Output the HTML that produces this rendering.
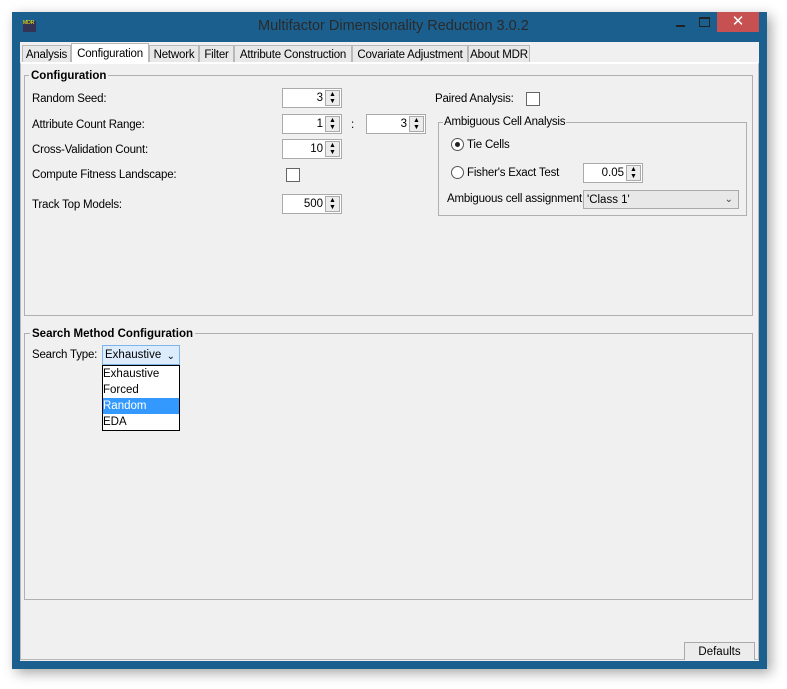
<!DOCTYPE html>
<html><head><style>
body{margin:0;width:787px;height:689px;background:#fff;position:relative;overflow:hidden;font-family:"Liberation Sans",sans-serif;font-size:11.5px;color:#000}
.a{position:absolute}
.win{left:12px;top:12px;width:755px;height:657px;background:#1b5f8e;box-shadow:4px 4px 12px rgba(0,0,0,.35)}
.client{left:20px;top:42px;width:739px;height:619px;background:#f0f0f0}
.tab{position:absolute;top:45px;height:17px;border:1px solid #b8b8b8;border-bottom:none;background:#e8e8e8;font-size:11.5px;line-height:18px;text-align:center;box-sizing:border-box;white-space:nowrap;overflow:hidden;letter-spacing:-0.2px}
.grp{position:absolute;border:1px solid #b0b0b0;box-sizing:border-box}
.lg{position:absolute;background:#f0f0f0;font-weight:bold;padding:0 2px;font-size:11.5px;white-space:nowrap;line-height:16px}
.spin{position:absolute;width:60px;height:20px;border:1px solid #aaa;background:#fff;box-sizing:border-box;line-height:19px;text-align:right}
.spin span{position:absolute;right:18px}
.spin i{position:absolute;right:1px;top:1px;width:15px;height:16px;border:1px solid #aaa;background:#ececec;font-style:normal;font-size:7px;line-height:7px;text-align:center;box-sizing:border-box}
.chk{position:absolute;width:12px;height:12px;border:1px solid #666;background:#fff}
.t{position:absolute;white-space:nowrap;letter-spacing:-0.2px;line-height:17px}
</style></head><body>
<div class="a win"></div>
<div class="t" style="left:258px;top:18px;font-size:14.5px;color:#2a2a2a;letter-spacing:0">Multifactor Dimensionality Reduction 3.0.2</div>
<div class="a" style="left:23px;top:21px;width:13px;height:11px;background:#335;font-size:5px;color:#ff0;line-height:5px">MDR</div>
<div class="a" style="left:676px;top:25px;width:9px;height:2px;background:#222"></div>
<div class="a" style="left:699px;top:17px;width:9px;height:7px;border:1px solid #222;border-top-width:2px"></div>
<div class="a" style="left:717px;top:12px;width:42px;height:20px;background:#c75050;color:#fff;text-align:center;font-size:15px;line-height:20px">✕</div>
<div class="a client"></div>
<div class="tab" style="left:22px;width:49px">Analysis</div>
<div class="tab" style="left:71px;top:43px;height:20px;width:78px;background:#fff;line-height:20px">Configuration</div>
<div class="tab" style="left:149px;width:50px">Network</div>
<div class="tab" style="left:199px;width:35px">Filter</div>
<div class="tab" style="left:234px;width:118px">Attribute Construction</div>
<div class="tab" style="left:352px;width:116px">Covariate Adjustment</div>
<div class="tab" style="left:468px;width:62px">About MDR</div>
<div class="a" style="left:20px;top:62px;width:739px;height:598px;border:1px solid #b8b8b8;border-top:2px solid #fff;box-sizing:border-box"></div>
<div class="grp" style="left:24px;top:75px;width:729px;height:241px"></div>
<div class="lg" style="left:29px;top:68px">Configuration</div>
<div class="t" style="left:32px;top:91px">Random Seed:</div>
<div class="t" style="left:32px;top:117px">Attribute Count Range:</div>
<div class="t" style="left:32px;top:142px">Cross-Validation Count:</div>
<div class="t" style="left:32px;top:167px">Compute Fitness Landscape:</div>
<div class="t" style="left:32px;top:197px">Track Top Models:</div>
<div class="spin" style="left:282px;top:88px"><span>3</span><i>▲<br>▼</i></div>
<div class="spin" style="left:282px;top:114px"><span>1</span><i>▲<br>▼</i></div>
<div class="t" style="left:351px;top:117px">:</div>
<div class="spin" style="left:366px;top:114px"><span>3</span><i>▲<br>▼</i></div>
<div class="spin" style="left:282px;top:139px"><span>10</span><i>▲<br>▼</i></div>
<div class="chk" style="left:286px;top:168px"></div>
<div class="spin" style="left:282px;top:194px"><span>500</span><i>▲<br>▼</i></div>
<div class="t" style="left:435px;top:91px">Paired Analysis:</div>
<div class="chk" style="left:526px;top:92px"></div>
<div class="grp" style="left:438px;top:122px;width:309px;height:94px"></div>
<div class="t" style="left:443px;top:114px;background:#f0f0f0;padding:0 1px">Ambiguous Cell Analysis</div>
<div class="a" style="left:451px;top:138px;width:11px;height:11px;border:1px solid #555;border-radius:50%;background:#fff"></div>
<div class="a" style="left:455px;top:142px;width:5px;height:5px;border-radius:50%;background:#222"></div>
<div class="t" style="left:467px;top:137px">Tie Cells</div>
<div class="a" style="left:451px;top:166px;width:11px;height:11px;border:1px solid #555;border-radius:50%;background:#fff"></div>
<div class="t" style="left:467px;top:165px">Fisher's Exact Test</div>
<div class="spin" style="left:583px;top:163px"><span>0.05</span><i>▲<br>▼</i></div>
<div class="t" style="left:447px;top:191px">Ambiguous cell assignment:</div>
<div class="a" style="left:583px;top:190px;width:156px;height:19px;border:1px solid #aaa;background:#e8e8e8;box-sizing:border-box;line-height:18px;padding-left:3px">'Class 1'<span style="position:absolute;right:5px;top:0;font-size:10px;color:#444">⌄</span></div>
<div class="grp" style="left:24px;top:333px;width:729px;height:267px"></div>
<div class="lg" style="left:30px;top:326px">Search Method Configuration</div>
<div class="t" style="left:32px;top:347px">Search Type:</div>
<div class="a" style="left:102px;top:345px;width:78px;height:20px;border:1px solid #7eb4ea;background:#dcecfc;box-sizing:border-box;line-height:19px;padding-left:2px">Exhaustive<span style="position:absolute;right:4px;top:1px;font-size:10px">⌄</span></div>
<div class="a" style="left:102px;top:365px;width:78px;height:66px;border:1px solid #000;background:#fff;box-sizing:border-box">
<div style="height:16px;line-height:17px">Exhaustive</div>
<div style="height:16px;line-height:17px">Forced</div>
<div style="height:16px;line-height:17px;background:#3399ff;color:#fff">Random</div>
<div style="height:16px;line-height:17px">EDA</div>
</div>
<div class="a" style="left:684px;top:642px;width:71px;height:18px;border:1px solid #aaa;border-bottom:none;background:#ececec;box-sizing:border-box;text-align:center;line-height:19px">Defaults</div>
</body></html>
